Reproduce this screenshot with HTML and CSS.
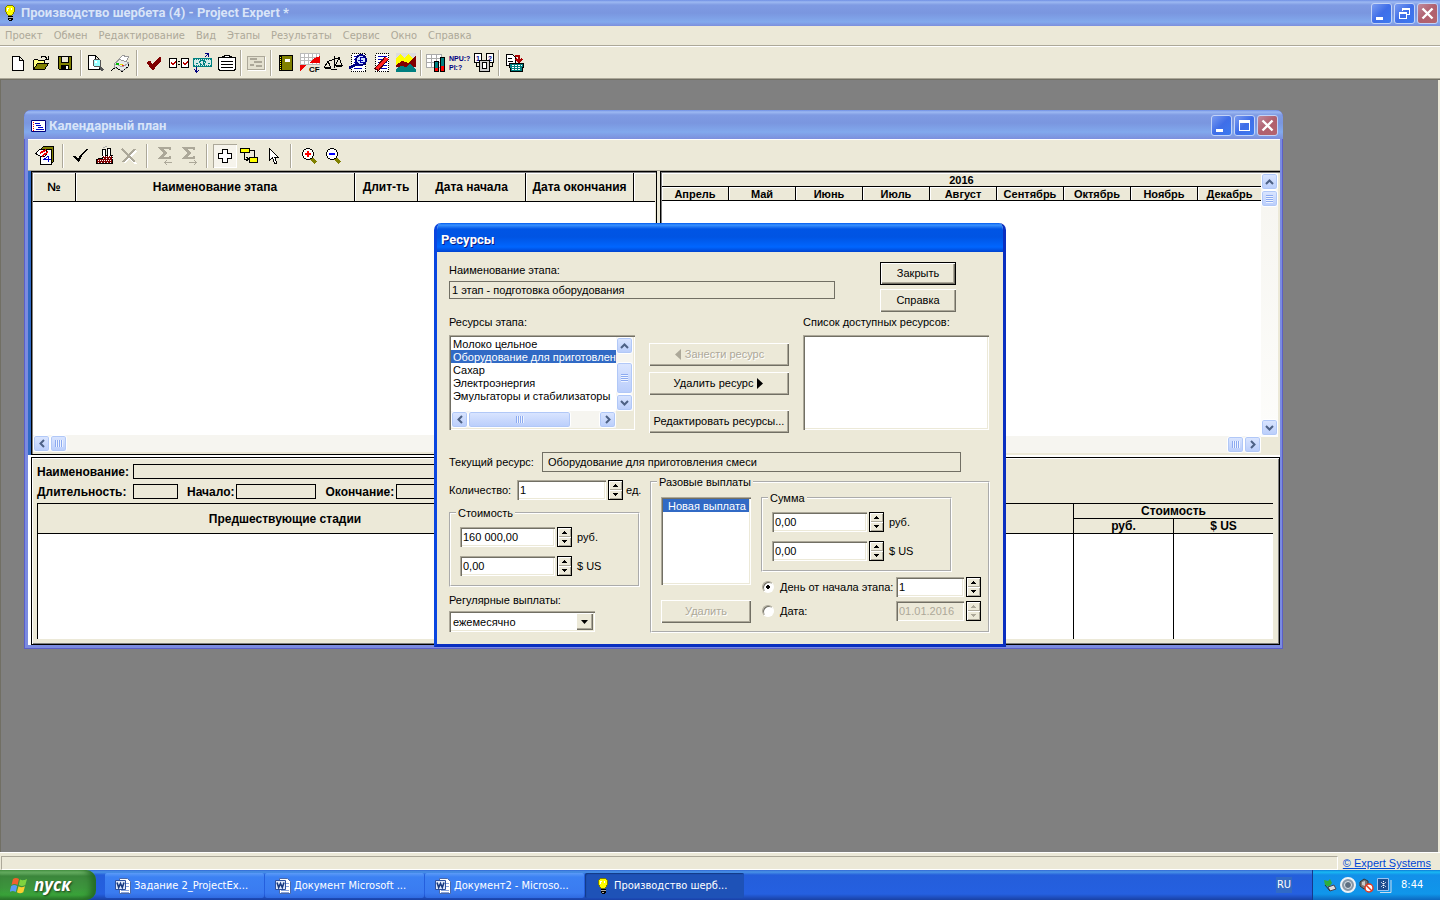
FILE: index.html
```
<!DOCTYPE html>
<html lang="ru">
<head>
    <meta charset="UTF-8">
    <meta name="viewport" content="width=device-width, initial-scale=1.0">
    <title>Производство шербета (4) - Project Expert</title>
    <link rel="stylesheet" href="styles.css">
</head>
<body>

<!-- shared shapes -->
<svg class="defs" width="0" height="0">
    <symbol id="bulb" viewBox="0 0 16 16">
        <path fill="#7a7a00" d="M5 0h6v1h1v1h1v5h-1v2h-1v1h-1v1H6v-1H5V9H4V7H3V2h1V1h1z"/>
        <path fill="#ff0" d="M5 1h6v1h1v5h-1v2h-1v1H6V9H5V7H4V2h1z"/>
        <path fill="#fff" d="M5 3h2v1H6v2H5zM9 3h1v2H9z"/>
        <path fill="#000" d="M6 11h5v1H6zM6 13h5v2h-1v1H7v-1H6z"/>
        <path fill="#aaa" d="M6 12h5v1H6zM7 14h2v1H7z"/>
    </symbol>
    <symbol id="word" viewBox="0 0 16 16">
        <path fill="#fff" stroke="#4a68a8" d="M4.500.5h8l3 3v12h-11z"/>
        <path stroke="#8aa4dc" d="M11 5.500h3M11 8.500h3M6 12.500h8M6 14.500h8"/>
        <path fill="#dfe9fb" stroke="#2a4f9e" d="M.5 2.500h10v9H.5z"/>
        <path fill="none" stroke="#17397f" stroke-width="1.600" d="M2 4.500l1.700 5 1.800-4 1.800 4L9 4.500"/>
    </symbol>
    <symbol id="up" viewBox="0 0 9 6"><path fill="none" stroke="#4d6185" stroke-width="2" d="M1 5l3.500-3.500L8 5"/></symbol>
    <symbol id="down" viewBox="0 0 9 6"><path fill="none" stroke="#4d6185" stroke-width="2" d="M1 1l3.500 3.500L8 1"/></symbol>
    <symbol id="left" viewBox="0 0 6 9"><path fill="none" stroke="#4d6185" stroke-width="2" d="M5 1L1.500 4.500 5 8"/></symbol>
    <symbol id="right" viewBox="0 0 6 9"><path fill="none" stroke="#4d6185" stroke-width="2" d="M1 1l3.500 3.500L1 8"/></symbol>
    <symbol id="min" viewBox="0 0 21 21"><path fill="#fff" d="M5 14h7v3H5z"/></symbol>
    <symbol id="max" viewBox="0 0 21 21"><path fill="#fff" d="M5 5h11v11H5zM6 8v7h9V8z" fill-rule="evenodd"/></symbol>
    <symbol id="restore" viewBox="0 0 21 21"><path fill="#fff" fill-rule="evenodd" d="M8 5h8v7h-3v-1h2V7H9v1H8zM5 9h8v7H5zM6 11v4h6v-4z"/></symbol>
    <symbol id="close" viewBox="0 0 21 21"><path stroke="#fff" stroke-width="2.400" d="M5.500 5.500l10 10M15.500 5.500l-10 10"/></symbol>
    <symbol id="tri-up" viewBox="0 0 5 3"><path fill="currentColor" d="M2 0h1v1h1v1h1v1H0V2h1V1h1z"/></symbol>
    <symbol id="tri-down" viewBox="0 0 5 3"><path fill="currentColor" d="M0 0h5v1H4v1H3v1H2V2H1V1H0z"/></symbol>
</svg>

<header class="titlebar app-title">
    <svg class="app-icon"><use href="#bulb"/></svg>
    <h1>Производство шербета (4) - Project Expert *</h1>
    <div class="win-buttons">
        <button aria-label="Свернуть"><svg><use href="#min"/></svg></button>
        <button aria-label="Восстановить"><svg><use href="#restore"/></svg></button>
        <button class="close" aria-label="Закрыть окно"><svg><use href="#close"/></svg></button>
    </div>
</header>

<nav class="menu">
    <a href="#">Проект</a>
    <a href="#">Обмен</a>
    <a href="#">Редактирование</a>
    <a href="#">Вид</a>
    <a href="#">Этапы</a>
    <a href="#">Результаты</a>
    <a href="#">Сервис</a>
    <a href="#">Окно</a>
    <a href="#">Справка</a>
</nav>

<div class="toolbar main-toolbar">
    <button aria-label="Новый"><svg viewBox="0 0 24 24"><path fill="#fff" stroke="#000" d="M6.500 5.500h7l4 4v10h-11zM13.500 5.500v4h4"/></svg></button>
    <button aria-label="Открыть"><svg viewBox="0 0 24 24">
        <path fill="#ffff80" stroke="#000" d="M3.500 18.500v-9l1-1h3l1 1h6v3"/>
        <path fill="#808000" stroke="#000" d="M3.500 18.500l4-6h11l-4 6z"/>
        <path fill="none" stroke="#000" d="M11 6.500l1-1h3l2 2M18.500 5v3.500H15"/></svg></button>
    <button aria-label="Сохранить"><svg viewBox="0 0 24 24">
        <path fill="#808000" stroke="#000" d="M4.500 5.500h13v13h-12l-1-1z"/>
        <path fill="#ece9d8" stroke="#000" d="M7.500 5.500h7v6h-7z"/><path d="M7 14h8v5H7z"/><path fill="#fff" d="M12 15h2v3h-2z"/></svg></button>
    <span class="sep"></span>
    <button aria-label="Просмотр"><svg viewBox="0 0 24 24">
        <path fill="#fff" stroke="#000" d="M4.500 4.500h7l4 4v10h-11zM11.500 4.500v4h4"/>
        <circle cx="13" cy="12" r="4" fill="#9ff" stroke="#555"/><path fill="#fff" d="M11 10h2v2h-2z"/>
        <path stroke="#555" stroke-width="2.500" d="M15 15l4 4.500"/></svg></button>
    <button aria-label="Печать"><svg viewBox="0 0 24 24">
        <path fill="#fff" stroke="#999" d="M10.500 9l4-4.500 6 1.500-3 6"/>
        <path fill="#e8e8e8" stroke="#999" d="M6.500 12.500l5-4 9 3v4l-6 4.500-8-3.500z"/>
        <path fill="none" stroke="#000" stroke-dasharray="2 1" d="M3 19.500l5-3 6 4 6-5v-4"/>
        <path fill="none" stroke="#aaa" d="M7 13l8 3 5-4"/>
        <path fill="#0b0" d="M8 12h3v2H8z"/><path fill="#dd0" d="M12 13h3v1h-3z"/><path fill="#e22" d="M14 14h2v1h-2z"/></svg></button>
    <span class="sep wide"></span>
    <button aria-label="Проверка"><svg viewBox="0 0 24 24"><path fill="#800000" d="M6 10h3l1 3 1 1 1-3 3-3 3-2h1v4l-4 4-3 5h-2l-3-4-2-3z"/></svg></button>
    <button aria-label="Сравнение"><svg viewBox="0 0 24 24">
        <path fill="#fff" stroke="#000" d="M3.500 7.500h7v9h-7zM15.500 7.500h7v9h-7z"/>
        <path fill="none" stroke="#b00" d="M5 11.500l2 2 3-3M17 11.500l2 2 3-3"/><path d="M12 10h2v1h-2zM12 13h2v1h-2z"/></svg></button>
    <button aria-label="Валюта"><svg viewBox="0 0 24 24">
        <path fill="#d5ece8" stroke="#008080" d="M3.500 7.500h18v8h-18z"/><path fill="none" stroke="#008080" stroke-dasharray="1 1" d="M4 8.500h17M4 14.500h17"/>
        <path fill="none" stroke="#008080" d="M12.500 9c-4 0-3 5 0 5s4-5 0-5M13 10v4M6 12h2M18 12h2"/>
        <path fill="none" stroke="#000080" d="M15 2.500h4M18.500 2v4M18 3l-3 3M6.500 16v5M4 18l2.500 3 2.500-2"/></svg></button>
    <button aria-label="Список"><svg viewBox="0 0 24 24">
        <path fill="#fff" stroke="#000" d="M4.500 6.500h17v12h-1v1h-15v-1h-1z"/><path fill="#fff" stroke="#000" d="M8.500 6.500v-1h2v-1h5v1h2v1z"/>
        <path stroke="#000" d="M7 10.500h12M7 13.500h12M7 16.500h12"/></svg></button>
    <span class="sep"></span>
    <button aria-label="Карточка" disabled><svg viewBox="0 0 24 24">
        <path fill="#e4e1d0" stroke="#aca899" d="M3.500 5.500h17v13h-17z"/><path stroke="#fff" d="M4 19.500h18M21.500 6v14"/>
        <path stroke="#aca899" stroke-width="2" d="M6 8h7M10 11h8M6 14h4M12 15h6"/></svg></button>
    <span class="sep"></span>
    <button aria-label="Книга"><svg viewBox="0 0 24 24">
        <path fill="#808000" stroke="#000" d="M5.500 4.500h13v15h-13z"/><path fill="#000" d="M6 5h2v14H6z"/><path stroke="#ff0" stroke-dasharray="1 1" d="M6.500 6v13"/>
        <path fill="#fff" d="M11 8h5v3h-5z"/></svg></button>
    <button aria-label="Кэш-фло"><svg viewBox="0 0 24 24">
        <path fill="#fff" stroke="#bbb" d="M2.500 2.500h19v11h-19zM6.500 3v10M10.500 3v10M14.500 3v10M18.500 3v10M3 6.500h18M3 9.500h18"/>
        <path fill="#e00" d="M22 5l-5 2-4 3-2 2h11zM2 14h7l-3 2-1 2-3 2z"/><text x="11" y="21" class="tiny">CF</text></svg></button>
    <button aria-label="Баланс"><svg viewBox="0 0 24 24"><path fill="none" stroke="#000" d="M12.500 5v12M5 10.500l13-4M6 10l-3.500 6h6L6 10M17 7l-3.500 7h6.500L17 7M2.500 17.500h6M14 15.500h6M9 18.500h6"/></svg></button>
    <button aria-label="Анализ"><svg viewBox="0 0 24 24">
        <path fill="#fff" stroke="#000" stroke-dasharray="1 1" d="M5.500 2.500h14v18h-14z"/><path stroke="#00b" stroke-width="1" d="M8 5.500h10M8 8.500h10M8 11.500h10M8 14.500h8M8 17.500h8"/>
        <circle cx="15" cy="9" r="5" fill="#cfe0ff" stroke="#000080" stroke-width="2"/><path fill="none" stroke="#00a" stroke-width="1" d="M18 6.500h-4v5h4M12 9h5"/><path stroke="#000080" stroke-width="3" d="M11 13l-8 4"/></svg></button>
    <button aria-label="Отчет"><svg viewBox="0 0 24 24">
        <path fill="#fff" stroke="#000" stroke-dasharray="1 1" d="M5.500 2.500h13v18h-13z"/><path stroke="#00b" d="M8 5.500h9M8 8.500h9M8 11.500h9M8 14.500h9M8 17.500h9"/>
        <path stroke="#500" stroke-width="5" d="M17 7L6 19"/><path stroke="#f22" stroke-width="3" d="M17 7L7 18"/></svg></button>
    <button aria-label="График"><svg viewBox="0 0 24 24">
        <path fill="#ddd" d="M2 2h20v19H2z"/><path fill="#ff0" d="M2 8l4-5 4 4 4-4 8 7v5H2z"/>
        <path fill="#800000" d="M2 14l6-4 6 2 8-8v12H2z"/><path fill="#008080" d="M2 18l5-3 5 1 4-3 6 5v3H2z"/></svg></button>
    <span class="sep"></span>
    <button aria-label="Показатели"><svg viewBox="0 0 24 24">
        <path fill="#fff" stroke="#aaa" d="M2.500 3.500h15v13h-15zM7.500 4v12M12.500 4v12M3 7.500h14M3 11.500h14"/>
        <path fill="#008080" stroke="#000" d="M10.500 10.500h4v10h-4zM16.500 6.500h4v14h-4z"/><path fill="#f00" d="M11 17h3v3h-3zM17 15h3v5h-3z"/></svg></button>
    <button aria-label="Эффективность"><svg viewBox="0 0 24 24"><text x="1" y="10" class="tiny npv">NPU:?</text><text x="1" y="19" class="tiny npv">PI:?</text></svg></button>
    <button aria-label="Варианты"><svg viewBox="0 0 24 24">
        <path fill="#fff" stroke="#000" d="M2.500 2.500h7v9h-7zM14.500 2.500h7v9h-7z"/><text x="4" y="10" class="tiny npv">1</text><text x="16" y="10" class="tiny npv">2</text>
        <path fill="none" stroke="#000" d="M4.500 12v3.500H7M20.500 12v3.500H18"/><path fill="#ccc" stroke="#000" d="M7.500 9.500h10v11h-10z"/><path fill="#fff" stroke="#000" d="M10.500 11.500h4v6h-4z"/></svg></button>
    <span class="sep"></span>
    <button aria-label="Расчет"><svg viewBox="0 0 24 24">
        <path fill="#fff" stroke="#000" d="M4.500 3.500h6l3 3v8h-9zM6 7.500h4M6 10.500h5"/>
        <path fill="#008080" stroke="#000" d="M7.500 12.500h14l-1 8h-12z"/><path stroke="#fff" stroke-dasharray="2 1" d="M10 14.500h10M10 16.500h9M10 18.500h9"/>
        <path fill="none" stroke="#a00" stroke-width="1.500" d="M13 5h4v5M14 8l3 3 3-3"/></svg></button>
</div>

<main class="workspace">

    <section class="window calendar">
        <div class="titlebar">
            <svg class="doc-icon" viewBox="0 0 15 12"><path fill="#fff" stroke="#000080" d="M.5.500h14v11H.5z"/><path stroke="#f00" stroke-dasharray="1 1" d="M2.500 2v9"/><path stroke="#00c" stroke-width="1" d="M4 3.500h5M5 5.500h5M7 7.500h5M5 9.500h8"/></svg>
            <h2>Календарный план</h2>
            <div class="win-buttons">
                <button aria-label="Свернуть"><svg><use href="#min"/></svg></button>
                <button aria-label="Развернуть"><svg><use href="#max"/></svg></button>
                <button class="close" aria-label="Закрыть окно"><svg><use href="#close"/></svg></button>
            </div>
        </div>

        <div class="client">
        <div class="toolbar cal-toolbar">
            <button aria-label="Выход"><svg viewBox="0 0 24 24">
                <path fill="#808000" stroke="#000" d="M8.500 4.500l2-2h10v15l-2 2z"/><path fill="#fff" stroke="#000" d="M7.500 5.500h11v15h-11z"/>
                <path fill="#fff" stroke="#000" d="M2.500 9.500l4-4h6l2 3-3 4H8l-2-1z"/><path stroke="#e00" stroke-width="1.500" d="M7 9l6-3M9 12l6-4"/><path stroke="#00c" fill="none" d="M15.500 12v6M15 12l-4 3.500h7"/></svg></button>
            <span class="sep"></span>
            <button aria-label="Применить"><svg viewBox="0 0 24 24"><path d="M4 12h2l3 3 2-4 6-6h2l-6 7-3 6H9z"/></svg></button>
            <button aria-label="Производство"><svg viewBox="0 0 24 24">
                <path fill="#800000" stroke="#000" d="M3.500 19.500v-4l3-1h3v-3h10v8z"/><path stroke="#fff" stroke-dasharray="1 1" d="M5 16.500h14M9 12.500h11"/><path stroke="#fff" stroke-dasharray="1 2" d="M5 18.500h14M10 14.500h10"/>
                <path fill="#fff" stroke="#000" d="M9.500 11.500v-6h3v6M14.500 11.500v-7h3v7"/><path stroke="#aaa" d="M10 4l4-2"/></svg></button>
            <button aria-label="Удалить этап" disabled><svg viewBox="0 0 24 24"><path stroke="#fff" stroke-width="2" d="M7 7l12 13M19 7L7 19"/><path stroke="#aca899" stroke-width="2" d="M5 5l13 13M18 5L6 18"/></svg></button>
            <span class="sep"></span>
            <button aria-label="Сумма назад" disabled><svg viewBox="0 0 24 24"><path fill="none" stroke="#aca899" stroke-width="2" d="M17 6V4H7l5 5-5 5h10v-2M8 4l5 5-5 5"/><path fill="none" stroke="#aca899" d="M12 18.500h7M14 16l-2 2.500 2 2.500"/></svg></button>
            <button aria-label="Сумма вперед" disabled><svg viewBox="0 0 24 24"><path fill="none" stroke="#aca899" stroke-width="2" d="M17 6V4H7l5 5-5 5h10v-2M8 4l5 5-5 5"/><path fill="none" stroke="#aca899" d="M12 18.500h7M17 16l2 2.500-2 2.500"/></svg></button>
            <span class="sep"></span>
            <button class="pressed" aria-label="Добавить этап"><svg viewBox="0 0 24 24"><path fill="#fff" stroke="#000" d="M9.500 5.500h5v4h4v5h-4v4h-5v-4h-4v-5h4z"/></svg></button>
            <button aria-label="Связать этапы"><svg viewBox="0 0 24 24"><path fill="#ff0" stroke="#000" d="M3.500 4.500h9v4h-9zM12.500 13.500h8v5h-8z"/><path fill="none" stroke="#000" d="M12.500 6.500h5v6M7.500 9v6h5M9.500 13l2 2-2 2"/></svg></button>
            <button aria-label="Выбор"><svg viewBox="0 0 24 24"><path fill="#fff" stroke="#000" d="M8.500 4.500v12l3-2.500 2 5h2l-1.500-5.500h3.500z"/></svg></button>
            <span class="sep"></span>
            <button aria-label="Увеличить"><svg viewBox="0 0 24 24"><path stroke="#808000" stroke-width="3" d="M14 14l5 5"/><circle cx="11" cy="10" r="5.500" fill="#fff" stroke="#000"/><path stroke="#f00" stroke-width="2" d="M8 10h6M11 7v6"/></svg></button>
            <button aria-label="Уменьшить"><svg viewBox="0 0 24 24"><path stroke="#808000" stroke-width="3" d="M14 14l5 5"/><circle cx="11" cy="10" r="5.500" fill="#fff" stroke="#000"/><path stroke="#00f" stroke-width="2" d="M8 10h6"/></svg></button>
        </div>

        <div class="panes">
            <div class="pane stages">
                <table class="head">
                    <colgroup><col class="c-num"><col class="c-name"><col class="c-len"><col class="c-date"><col class="c-date"><col></colgroup>
                    <tr><th>№</th><th>Наименование этапа</th><th>Длит-ть</th><th>Дата начала</th><th>Дата окончания</th><th></th></tr>
                </table>
                <div class="blank"></div>
                <div class="hscroll">
                    <button aria-label="Влево"><svg class="chev-h"><use href="#left"/></svg></button>
                    <span class="thumb grip-h"></span>
                </div>
            </div>
            <div class="pane gantt">
                <div class="gantt-body">
                    <table class="head months">
                        <colgroup><col class="c-month" span="8"><col></colgroup>
                        <tr><th colspan="9">2016</th></tr>
                        <tr><th>Апрель</th><th>Май</th><th>Июнь</th><th>Июль</th><th>Август</th><th>Сентябрь</th><th>Октябрь</th><th>Ноябрь</th><th>Декабрь</th></tr>
                    </table>
                    <div class="blank"></div>
                    <div class="hscroll end">
                        <span class="thumb grip-h"></span>
                        <button aria-label="Вправо"><svg class="chev-h"><use href="#right"/></svg></button>
                    </div>
                </div>
                <div class="vscroll">
                    <button aria-label="Вверх"><svg class="chev-v"><use href="#up"/></svg></button>
                    <span class="thumb grip-v"></span>
                    <span class="track"></span>
                    <button aria-label="Вниз"><svg class="chev-v"><use href="#down"/></svg></button>
                </div>
            </div>
        </div>

        <div class="details">
            <div class="detail-row"><span class="detail-label">Наименование:</span><span class="box long"></span></div>
            <div class="detail-row">
                <span class="detail-label">Длительность:</span><span class="box short"></span>
                <span>Начало:</span><span class="box"></span>
                <span>Окончание:</span><span class="box"></span>
            </div>
            <table class="previous">
                <colgroup><col class="c-prev"><col><col class="c-cost"><col class="c-cost"></colgroup>
                <thead>
                    <tr><th rowspan="2">Предшествующие стадии</th><th rowspan="2"></th><th colspan="2">Стоимость</th></tr>
                    <tr><th>руб.</th><th>$ US</th></tr>
                </thead>
                <tbody><tr><td></td><td></td><td></td><td></td></tr></tbody>
            </table>
        </div>
        </div>
    </section>

    <section class="window dialog" role="dialog" aria-label="Ресурсы">
        <div class="titlebar active"><h2>Ресурсы</h2></div>
        <form class="dialog-body">
            <div class="row-top">
                <div class="stage">
                    <label for="stage">Наименование этапа:</label>
                    <output class="flat" id="stage">1 этап - подготовка оборудования</output>
                </div>
                <div class="dialog-actions">
                    <button type="button" class="btn default">Закрыть</button>
                    <button type="button" class="btn">Справка</button>
                </div>
            </div>

            <div class="row-lists">
                <div>
                    <p class="caption">Ресурсы этапа:</p>
                    <div class="listbox scrolled">
                        <ul>
                            <li>Молоко цельное</li>
                            <li class="selected">Оборудование для приготовления</li>
                            <li>Сахар</li>
                            <li>Электроэнергия</li>
                            <li>Эмульгаторы и стабилизаторы</li>
                        </ul>
                        <div class="vscroll">
                            <button type="button" aria-label="Вверх"><svg class="chev-v"><use href="#up"/></svg></button>
                            <span class="track"></span>
                            <span class="thumb tall grip-v"></span>
                            <button type="button" aria-label="Вниз"><svg class="chev-v"><use href="#down"/></svg></button>
                        </div>
                        <div class="hscroll">
                            <button type="button" aria-label="Влево"><svg class="chev-h"><use href="#left"/></svg></button>
                            <span class="thumb long grip-h"></span>
                            <span class="track"></span>
                            <button type="button" aria-label="Вправо"><svg class="chev-h"><use href="#right"/></svg></button>
                        </div>
                    </div>
                </div>
                <div class="transfer">
                    <button type="button" class="btn" disabled><svg class="arrow" viewBox="0 0 7 11"><path fill="currentColor" d="M7 0v11L1 5.500z"/></svg>Занести ресурс</button>
                    <button type="button" class="btn">Удалить ресурс<svg class="arrow" viewBox="0 0 7 11"><path fill="currentColor" d="M0 0v11l6-5.500z"/></svg></button>
                    <button type="button" class="btn edit">Редактировать ресурсы...</button>
                </div>
                <div>
                    <p class="caption">Список доступных ресурсов:</p>
                    <div class="listbox"></div>
                </div>
            </div>

            <div class="row-current">
                <label for="current">Текущий ресурс:</label>
                <output class="flat" id="current">Оборудование для приготовления смеси</output>
            </div>

            <div class="row-bottom">
                <div class="left">
                    <div class="field quantity">
                        <label for="qty">Количество:</label>
                        <input id="qty" class="wide" type="text" value="1">
                        <span class="spin"><button type="button" aria-label="Больше"><svg><use href="#tri-up"/></svg></button><button type="button" aria-label="Меньше"><svg><use href="#tri-down"/></svg></button></span>
                        <span class="unit-near">ед.</span>
                    </div>
                    <fieldset class="money">
                        <legend>Стоимость</legend>
                        <div class="field">
                            <input id="cost-rub" type="text" value="160 000,00">
                            <span class="spin"><button type="button" aria-label="Больше"><svg><use href="#tri-up"/></svg></button><button type="button" aria-label="Меньше"><svg><use href="#tri-down"/></svg></button></span>
                            <label for="cost-rub">руб.</label>
                        </div>
                        <div class="field">
                            <input id="cost-usd" type="text" value="0,00">
                            <span class="spin"><button type="button" aria-label="Больше"><svg><use href="#tri-up"/></svg></button><button type="button" aria-label="Меньше"><svg><use href="#tri-down"/></svg></button></span>
                            <label for="cost-usd">$ US</label>
                        </div>
                    </fieldset>
                    <label class="caption" for="regular">Регулярные выплаты:</label>
                    <div class="combo">
                        <select id="regular"><option>ежемесячно</option></select>
                        <span class="combo-arrow"><svg viewBox="0 0 7 4"><path d="M0 0h7L3.500 4z"/></svg></span>
                    </div>
                </div>

                <fieldset class="once">
                    <legend>Разовые выплаты</legend>
                    <div class="once-list">
                        <div class="listbox"><ul><li class="selected">Новая выплата</li></ul></div>
                        <button type="button" class="btn" disabled>Удалить</button>
                    </div>
                    <div class="once-form">
                        <fieldset class="money">
                            <legend>Сумма</legend>
                            <div class="field">
                                <input id="sum-rub" type="text" value="0,00">
                                <span class="spin"><button type="button" aria-label="Больше"><svg><use href="#tri-up"/></svg></button><button type="button" aria-label="Меньше"><svg><use href="#tri-down"/></svg></button></span>
                                <label for="sum-rub">руб.</label>
                            </div>
                            <div class="field">
                                <input id="sum-usd" type="text" value="0,00">
                                <span class="spin"><button type="button" aria-label="Больше"><svg><use href="#tri-up"/></svg></button><button type="button" aria-label="Меньше"><svg><use href="#tri-down"/></svg></button></span>
                                <label for="sum-usd">$ US</label>
                            </div>
                        </fieldset>
                        <div class="when">
                            <input type="radio" name="when" id="by-day" checked>
                            <label for="by-day">День от начала этапа:</label>
                            <input type="text" value="1" aria-label="День">
                            <span class="spin"><button type="button" aria-label="Больше"><svg><use href="#tri-up"/></svg></button><button type="button" aria-label="Меньше"><svg><use href="#tri-down"/></svg></button></span>
                        </div>
                        <div class="when">
                            <input type="radio" name="when" id="by-date">
                            <label for="by-date">Дата:</label>
                            <input type="text" value="01.01.2016" aria-label="Дата выплаты" disabled>
                            <span class="spin"><button type="button" aria-label="Больше" disabled><svg><use href="#tri-up"/></svg></button><button type="button" aria-label="Меньше" disabled><svg><use href="#tri-down"/></svg></button></span>
                        </div>
                    </div>
                </fieldset>
            </div>
        </form>
    </section>
</main>

<div class="statusbar">
    <span class="status-text"></span>
    <a href="#">© Expert Systems</a>
</div>

<footer class="taskbar">
    <button class="start">
        <svg viewBox="0 0 18 17"><path fill="#f0612d" d="M3 2c2-1.500 4-1.300 6 0L7.500 8C5.500 6.800 3.500 6.800 1.500 8z"/><path fill="#7fd33f" d="M10 2.500c2 1 4 1 7-.5l-1.700 6c-2.300 1.300-4.500 1.300-6.500 0z"/><path fill="#5b9bf5" d="M1.200 9c2-1.200 4-1.200 6 0L5.700 15c-2-1.200-4-1.200-6 0z"/><path fill="#fbcf30" d="M8.500 9.300c2 1.200 4 1.200 6.500 0l-1.700 6c-2.300 1.300-4.500 1.200-6.400 0z"/></svg>
        <span>пуск</span>
    </button>
    <div class="tasks">
        <button><svg><use href="#word"/></svg>Задание 2_ProjectEx...</button>
        <button><svg><use href="#word"/></svg>Документ Microsoft ...</button>
        <button><svg><use href="#word"/></svg>Документ2 - Microso...</button>
        <button class="current"><svg><use href="#bulb"/></svg>Производство шерб...</button>
    </div>
    <span class="lang">RU</span>
    <div class="tray">
        <svg viewBox="0 0 16 16"><path fill="#2fae3b" d="M2 3l4 1 2-2 2 4-3 4-4-2z"/><path fill="#ddd" stroke="#445" d="M6 10l6-2 2 4-6 2z"/><path stroke="#333" d="M3 8l5 6"/></svg>
        <svg viewBox="0 0 16 16"><circle cx="8" cy="8" r="7" fill="#8898a8" stroke="#eef2f6" stroke-width="2"/><circle cx="8" cy="8" r="3.500" fill="#5d6e80" stroke="#dfe6ec"/></svg>
        <svg viewBox="0 0 16 16"><path fill="#777" stroke="#333" d="M2 5l4-3 4 2v6l-4 2-4-3z"/><path fill="#ccc" d="M4 5l3-1v5L4 8z"/><circle cx="11" cy="11" r="4" fill="#fff" stroke="#e03a20" stroke-width="1.500"/><path stroke="#e03a20" stroke-width="1.500" d="M8 8l6 6"/></svg>
        <svg viewBox="0 0 16 16"><path fill="#1c4f91" stroke="#9cc5f2" d="M1.500 1.500h11v12h-11z"/><path stroke="#fff" stroke-dasharray="1 1" d="M7.500 4v7M5 5l5 5M10 5l-5 5"/><path fill="none" stroke="#cde" d="M4 15.500h11V3"/></svg>
        <time>8:44</time>
    </div>
</footer>

</body>
</html>
```
FILE: styles.css
```
* {
    box-sizing: border-box;
}
body {
    margin: 0;
    height: 100vh;
    display: flex;
    flex-direction: column;
    overflow: hidden;
    background: #ece9d8;
    color: #000;
    font: 11px/14px "Liberation Sans", Arial, sans-serif;
}
h1, h2, p, ul {
    margin: 0;
    padding: 0;
}
button, input, select {
    font: inherit;
    color: inherit;
    margin: 0;
    padding: 0;
    border: none;
    border-radius: 0;
}
svg {
    display: block;
    flex: none;
}
.defs {
    position: absolute;
}

/* title bars */
.titlebar {
    flex: none;
    display: flex;
    align-items: center;
    height: 29px;
    padding: 2px 5px 0 7px;
    background: linear-gradient(#6f8fe4 0, #9db9f2 2px, #7f9be3 5px, #7a96df 13px, #82a9ed 22px, #7c8fdc 100%);
    color: #d8e4f8;
}
.titlebar h1, .titlebar h2 {
    flex: 1;
    font: bold 13px/18px Roboto, "Noto Sans", sans-serif;
}
.titlebar.active {
    background: linear-gradient(#0058ee 0, #3a93ff 2px, #0055e5 6px, #0054e3 14px, #0066ff 24px, #0043cf 100%);
    color: #fff;
    text-shadow: 1px 1px #0a1883;
}
.app-title {
    height: 26px;
    padding: 0 2px;
}
.app-icon {
    width: 16px;
    height: 16px;
    margin-right: 3px;
}
.doc-icon {
    width: 15px;
    height: 12px;
    margin-right: 3px;
}
.win-buttons {
    display: flex;
    gap: 2px;
}
.win-buttons button {
    width: 21px;
    height: 21px;
    border: 1px solid #c3d3f7;
    border-radius: 3px;
    background: linear-gradient(135deg, #7a9bf0, #3f6ee8 50%, #3c7af0);
}
.win-buttons .close {
    background: linear-gradient(135deg, #c08a9c, #b0606e 50%, #b4646c);
}
.win-buttons svg {
    width: 21px;
    height: 21px;
    margin: -1px;
}

/* menu and toolbars */
.menu {
    flex: none;
    display: flex;
    gap: 11px;
    height: 20px;
    padding: 3px 5px 0;
    border-bottom: 1px solid #aca899;
    font: 11px/14px "DejaVu Sans Condensed", "DejaVu Sans", sans-serif;
}
.menu a {
    color: #aca899;
    text-decoration: none;
}
.toolbar {
    flex: none;
    display: flex;
    align-items: center;
    border-top: 1px solid #fff;
}
.toolbar button {
    width: 24px;
    height: 24px;
    background: none;
}
.toolbar svg {
    width: 24px;
    height: 24px;
    shape-rendering: crispEdges;
}
.toolbar .pressed {
    background: #f6f4ec;
    box-shadow: inset 1px 1px #aca899, inset -1px -1px #fff;
}
.main-toolbar {
    height: 33px;
    padding: 1px 0 0 6px;
    border-bottom: 1px solid #aca899;
}
.sep {
    width: 2px;
    height: 26px;
    margin: 0 2px;
    border-left: 1px solid #aca899;
    border-right: 1px solid #fff;
}
.sep.wide {
    margin: 0 4px;
}
.tiny {
    font: bold 8px "Liberation Sans", sans-serif;
}
.npv {
    font-size: 7px;
    fill: #000080;
}

/* windows */
.workspace {
    flex: 1;
    position: relative;
    background: #808080;
    box-shadow: inset 1px 1px #716f64, inset -2px 0 #ece9d8;
}
.window {
    position: absolute;
    display: flex;
    flex-direction: column;
    border-radius: 7px 7px 0 0;
    overflow: hidden;
}
.calendar {
    left: 24px;
    top: 31px;
    width: 1259px;
    height: 539px;
    background: #7b8be0;
    box-shadow: inset 0 0 0 1px #5b5fc7;
}
.client {
    flex: 1;
    display: flex;
    flex-direction: column;
    margin: 0 3px 4px 4px;
    background: #fff;
}
.cal-toolbar {
    height: 32px;
    padding: 2px 0 0 5px;
    background: #ece9d8;
    border-bottom: 1px solid #aca899;
}
.cal-toolbar .sep {
    height: 24px;
    margin: 0 5px;
}
.dialog {
    left: 434px;
    top: 144px;
    width: 572px;
    height: 424px;
    border: 3px solid #0a46e0;
    border-top: none;
    border-right-color: #0a2fc0;
    border-bottom-color: #0a2fc0;
    background: #ece9d8;
}
.dialog .titlebar {
    padding: 4px 4px 0;
}

/* calendar panes */
.panes {
    flex: none;
    display: grid;
    grid-template-columns: 626px 1fr;
    gap: 3px;
    height: 284px;
    border-left: 3px solid #316ac5;
    background: #ece9d8;
}
.pane {
    display: flex;
    border-top: 1px solid #000;
    border-left: 1px solid #000;
    box-shadow: inset 1px 1px #808080;
    padding: 1px 1px 2px 1px;
}
.stages {
    flex-direction: column;
    border-right: 1px solid #000;
    border-bottom: 1px solid #000;
}
.gantt {
    padding-right: 2px;
}
.gantt-body {
    flex: 1;
    display: flex;
    flex-direction: column;
}
.blank {
    flex: 1;
    background: #fff;
}
table {
    border-collapse: separate;
    border-spacing: 0;
    table-layout: fixed;
    width: 100%;
}
th {
    padding: 0;
    font: bold 12px/14px "Liberation Sans", Arial, sans-serif;
}
.head th {
    height: 29px;
    background: #ece9d8;
    border-right: 1px solid #000;
    border-bottom: 1px solid #000;
    box-shadow: inset 1px 1px #fff;
}
.head th:last-child {
    border-right: none;
}
.months th {
    height: 14px;
    font-size: 11px;
    line-height: 12px;
}
.c-num {
    width: 43px;
}
.c-name {
    width: 279px;
}
.c-len {
    width: 63px;
}
.c-date {
    width: 108px;
}
.c-month {
    width: 67px;
}

/* scroll bars */
.hscroll, .vscroll {
    display: flex;
    flex: none;
    background: #f6f5f0;
}
.hscroll {
    height: 17px;
}
.hscroll.end {
    justify-content: flex-end;
}
.vscroll {
    flex-direction: column;
    width: 17px;
}
.gantt .vscroll {
    padding-bottom: 17px;
    background: linear-gradient(#f6f5f0, #fdfdfb) no-repeat;
    background-size: 100% 264px;
}
.vscroll button, .hscroll button, .thumb {
    width: 17px;
    height: 17px;
    flex: none;
    display: flex;
    align-items: center;
    justify-content: center;
    border: 1px solid #fff;
    border-radius: 3px;
    background: linear-gradient(#dbe6ff, #b9cdfb);
    box-shadow: inset 0 0 0 1px #b1c8f7;
}
.track {
    flex: 1;
}
.chev-v {
    width: 9px;
    height: 6px;
}
.chev-h {
    width: 6px;
    height: 9px;
}
.grip-h::after, .grip-v::after {
    content: "";
    width: 8px;
    height: 7px;
    background: repeating-linear-gradient(90deg, #8caaf0 0 1px, #eef4ff 1px 2px);
}
.grip-v::after {
    width: 7px;
    height: 8px;
    background: repeating-linear-gradient(#8caaf0 0 1px, #eef4ff 1px 2px);
}
.thumb.tall {
    height: 32px;
}
.thumb.long {
    width: 103px;
}

/* stage details */
.details {
    flex: 1;
    display: flex;
    flex-direction: column;
    margin: 2px 0 0 3px;
    padding: 6px 6px 5px 5px;
    border: 1px solid #000;
    background: #ece9d8;
    box-shadow: inset 1px 1px #fff, inset -1px -1px #808080;
    font-weight: bold;
    font-size: 12px;
}
.detail-row {
    display: flex;
    align-items: center;
    height: 15px;
    margin-bottom: 4px;
}
.detail-row:first-child {
    margin-bottom: 5px;
}
.detail-label {
    width: 96px;
}
.box {
    width: 80px;
    height: 15px;
    margin: 0 9px 0 2px;
    border: 1px solid #000;
}
.detail-label + .box {
    margin-left: 0;
}
.box.short {
    width: 45px;
}
.box.long {
    width: 640px;
}
.previous {
    flex: 1;
    border-top: 1px solid #000;
    border-left: 1px solid #000;
    background: #fff;
}
.previous th {
    height: 15px;
    background: #ece9d8;
    border-bottom: 1px solid #000;
}
.previous td {
    border-left: 1px solid #000;
}
.previous th + th, .previous tr + tr th:first-child {
    border-left: 1px solid #000;
}
.previous td:first-child {
    border-left: none;
}
.c-prev {
    width: 494px;
}
.c-cost {
    width: 100px;
}

/* dialog */
.dialog-body {
    flex: 1;
    padding: 10px 13px 0 12px;
}
.caption {
    display: block;
    margin-bottom: 6px;
}
.btn {
    display: flex;
    align-items: center;
    justify-content: center;
    gap: 4px;
    height: 23px;
    padding-bottom: 1px;
    background: #ece9d8;
    box-shadow: inset 1px 1px #fff, inset -1px -1px #716f64, inset -2px -2px #aca899;
}
.btn.default {
    border: 1px solid #000;
}
.btn:disabled {
    color: #aca899;
    text-shadow: 1px 1px #fff;
}
.arrow {
    width: 7px;
    height: 11px;
}
.flat {
    display: block;
    height: 18px;
    padding: 1px 2px;
    border: 1px solid #716f64;
}
.row-top {
    display: flex;
    justify-content: space-between;
    align-items: flex-start;
    height: 53px;
}
.stage {
    width: 386px;
    padding-top: 1px;
}
.stage .flat {
    margin-top: 4px;
}
.dialog-actions {
    display: grid;
    gap: 4px;
    width: 76px;
    margin-right: 34px;
}
.row-lists {
    display: grid;
    grid-template-columns: 186px 140px 186px;
    gap: 14px;
    height: 137px;
}
.listbox {
    height: 95px;
    padding: 2px;
    background: #fff;
    box-shadow: inset 1px 1px #aca899, inset 2px 2px #716f64, inset -1px -1px #fff, inset -2px -2px #ece9d8;
}
.listbox ul {
    list-style: none;
    overflow: hidden;
}
.listbox li {
    height: 13px;
    padding-left: 2px;
    line-height: 15px;
    white-space: nowrap;
}
.listbox .selected {
    background: #316ac5;
    color: #fff;
}
.scrolled {
    display: grid;
    grid-template: 1fr 17px / 1fr 17px;
    background: linear-gradient(#ece9d8, #ece9d8) no-repeat right bottom / 19px 19px, #fff;
}
.transfer {
    display: flex;
    flex-direction: column;
    gap: 6px;
    padding-top: 28px;
}
.transfer .edit {
    margin-top: 9px;
}
.row-current {
    display: flex;
    align-items: center;
    gap: 7px;
    height: 20px;
    margin-bottom: 3px;
}
.row-current label {
    width: 86px;
}
.row-current .flat {
    width: 419px;
    height: 20px;
    padding: 2px 5px;
}
.row-bottom {
    display: grid;
    grid-template-columns: 191px 340px;
    gap: 10px;
}
fieldset {
    margin: 0;
    padding: 0;
    border: 2px groove #fff;
    min-width: 0;
}
legend {
    margin-left: -4px;
    padding: 0 2px;
    height: 14px;
}
.field {
    display: flex;
    align-items: center;
    height: 20px;
}
.field input {
    flex: none;
    width: 95px;
}
.field label {
    flex: none;
    margin-left: 5px;
}
input[type="text"] {
    height: 20px;
    padding: 0 3px;
    background: #fff;
    box-shadow: inset 1px 1px #aca899, inset 2px 2px #716f64, inset -1px -1px #fff, inset -2px -2px #ece9d8;
}
input[type="text"]:disabled {
    background: #ece9d8;
    color: #aca899;
}
.spin {
    flex: none;
    display: flex;
    flex-direction: column;
    width: 15px;
    height: 20px;
    margin-left: 2px;
    border: 1px solid #000;
}
.spin button {
    flex: 1;
    display: flex;
    align-items: center;
    justify-content: center;
    background: #ece9d8;
    box-shadow: inset 1px 1px #fff, inset -1px -1px #aca899;
}
.spin button:disabled {
    color: #aca899;
}
.spin svg {
    width: 5px;
    height: 3px;
}
.quantity {
    margin: 5px 0 6px;
}
.quantity label {
    width: 68px;
    margin-left: 0;
}
.quantity .wide {
    width: 89px;
}
.unit-near {
    margin-left: 3px;
}
.money {
    height: 81px;
    padding: 0 9px;
}
.money .field {
    margin-top: 9px;
}
.money legend + .field {
    margin-top: 7px;
}
.left .money {
    margin-bottom: 6px;
}
.left .caption {
    margin-bottom: 4px;
}
.combo {
    position: relative;
    width: 146px;
}
.combo select {
    width: 100%;
    height: 21px;
    padding: 0 4px;
    appearance: none;
    background: #fff;
    box-shadow: inset 1px 1px #aca899, inset 2px 2px #716f64, inset -1px -1px #fff, inset -2px -2px #ece9d8;
}
.combo-arrow {
    position: absolute;
    top: 2px;
    right: 2px;
    display: flex;
    align-items: center;
    justify-content: center;
    width: 17px;
    height: 17px;
    background: #ece9d8;
    box-shadow: inset 1px 1px #fff, inset -1px -1px #716f64, inset -2px -2px #aca899;
    pointer-events: none;
}
.combo-arrow svg {
    width: 7px;
    height: 4px;
}
.once {
    height: 158px;
    padding: 0 7px 0 9px;
}
.once-list {
    float: left;
    width: 90px;
    padding-top: 8px;
}
.once-list .listbox {
    height: 88px;
    margin-bottom: 15px;
}
.once-list li {
    padding-left: 5px;
}
.once-list .btn {
    width: 100%;
}
.once-form {
    display: flow-root;
    padding: 2px 0 0 10px;
}
.once-form .money {
    width: 191px;
    margin-bottom: 5px;
}
.when {
    display: flex;
    align-items: center;
    height: 20px;
    margin-bottom: 4px;
    padding-left: 1px;
}
.when label {
    width: 116px;
    margin-left: 6px;
    white-space: nowrap;
}
.when input[type="text"] {
    width: 68px;
}
input[type="radio"] {
    appearance: none;
    flex: none;
    width: 12px;
    height: 12px;
    border: 1px solid #aca899;
    border-right-color: #fff;
    border-bottom-color: #fff;
    border-radius: 50%;
    background: #fff;
    box-shadow: inset 1px 1px #716f64;
}
input[type="radio"]:checked {
    background: radial-gradient(#000 0 2px, #fff 2px);
}

/* status bar and task bar */
.statusbar {
    flex: none;
    display: flex;
    align-items: flex-end;
    gap: 5px;
    height: 18px;
    padding: 3px 9px 0 1px;
    border-top: 1px solid #fff;
}
.status-text {
    flex: 1;
    height: 14px;
    border: 1px solid #aca899;
    border-right-color: #fff;
    border-bottom-color: #fff;
}
.statusbar a {
    color: #0046d5;
}
.taskbar {
    flex: none;
    display: flex;
    align-items: stretch;
    height: 30px;
    background: linear-gradient(#3168d5 0, #4993e6 2px, #245edb 5px, #2560e0 24px, #1941a5 100%);
    color: #fff;
    font: 11px/14px "DejaVu Sans Condensed", "DejaVu Sans", sans-serif;
}
.start {
    display: flex;
    align-items: center;
    gap: 6px;
    width: 96px;
    padding-left: 10px;
    border-radius: 0 10px 10px 0;
    background: linear-gradient(#5eac56 0, #79c073 2px, #3c873c 6px, #3c953c 18px, #3aa53a 25px, #2d7a2d 100%);
    box-shadow: inset -5px 0 6px #256b25;
    font: italic bold 17px/22px "Open Sans", "Noto Sans", sans-serif;
    text-shadow: 1px 1px 2px #1b3b1b;
}
.start svg {
    width: 18px;
    height: 17px;
}
.tasks {
    flex: 1;
    display: flex;
    gap: 1px;
    padding: 3px 0 2px 9px;
}
.tasks button {
    display: flex;
    align-items: center;
    gap: 3px;
    width: 159px;
    padding-left: 10px;
    border-radius: 2px;
    background: linear-gradient(#5c9bf8, #3c81f3 4px, #3a7bf0 20px, #2f6ae0);
    white-space: nowrap;
}
.tasks .current {
    background: #1e52b7;
    box-shadow: inset 1px 1px 1px #123a86;
}
.tasks svg {
    width: 16px;
    height: 16px;
}
.lang {
    align-self: center;
    margin-right: 20px;
    padding: 1px;
    background: #316ac5;
}
.tray {
    display: flex;
    align-items: center;
    gap: 2px;
    width: 128px;
    padding-left: 9px;
    border-left: 1px solid #16398c;
    background: linear-gradient(#0c7bd8 0, #19b9f3 2px, #1290e9 5px, #1096ea 24px, #0c68c0 100%);
}
.tray time {
    margin-left: 7px;
}
.tray svg {
    width: 16px;
    height: 16px;
}
```
